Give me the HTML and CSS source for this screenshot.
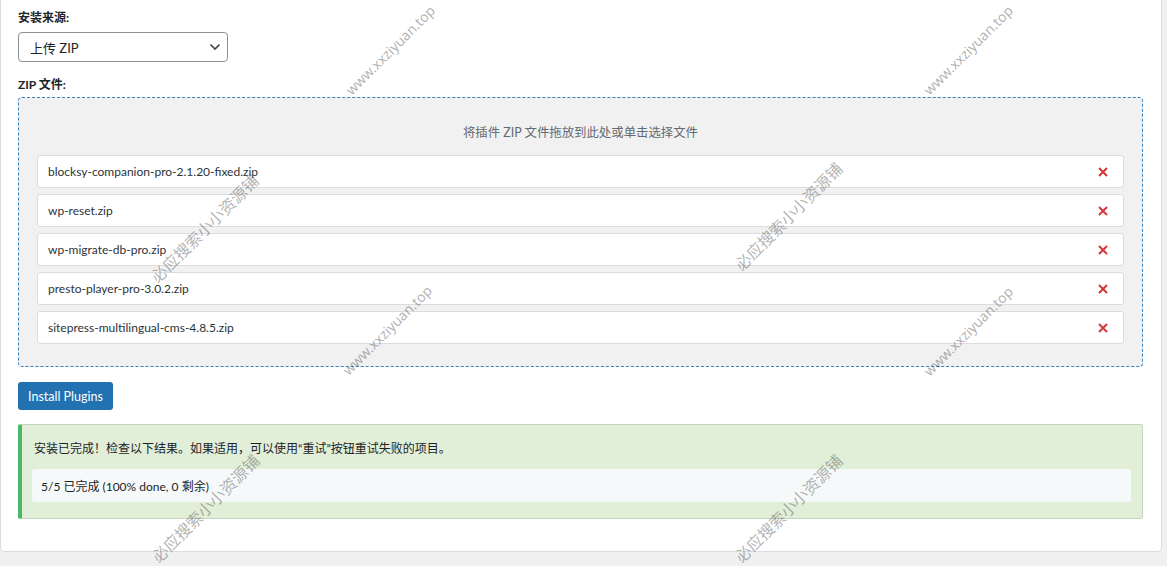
FILE: index.html
```html
<!DOCTYPE html>
<html lang="zh-CN">
<head>
  <meta charset="UTF-8" />
  <title>安装插件</title>
  <link rel="stylesheet" href="styles.css">
</head>
<body>
  <div class="card">
    <label class="field-label">安装来源:</label>
    <div class="select">
      <span>上传 ZIP</span>
      <svg class="chevron" width="12" height="8" viewBox="0 0 12 8"><path d="M1.5 1.5 L6 6 L10.5 1.5" fill="none" stroke="#3c434a" stroke-width="1.6"/></svg>
    </div>

    <label class="field-label zip-label">ZIP 文件:</label>
    <div class="dropzone">
      <p class="drop-hint">将插件 ZIP 文件拖放到此处或单击选择文件</p>
      <ul class="files">
        <li class="file"><span>blocksy-companion-pro-2.1.20-fixed.zip</span><svg class="remove" width="10" height="10" viewBox="0 0 10 10"><path d="M1 1 L9 9 M9 1 L1 9" stroke="#d63638" stroke-width="2"/></svg></li>
        <li class="file"><span>wp-reset.zip</span><svg class="remove" width="10" height="10" viewBox="0 0 10 10"><path d="M1 1 L9 9 M9 1 L1 9" stroke="#d63638" stroke-width="2"/></svg></li>
        <li class="file"><span>wp-migrate-db-pro.zip</span><svg class="remove" width="10" height="10" viewBox="0 0 10 10"><path d="M1 1 L9 9 M9 1 L1 9" stroke="#d63638" stroke-width="2"/></svg></li>
        <li class="file"><span>presto-player-pro-3.0.2.zip</span><svg class="remove" width="10" height="10" viewBox="0 0 10 10"><path d="M1 1 L9 9 M9 1 L1 9" stroke="#d63638" stroke-width="2"/></svg></li>
        <li class="file"><span>sitepress-multilingual-cms-4.8.5.zip</span><svg class="remove" width="10" height="10" viewBox="0 0 10 10"><path d="M1 1 L9 9 M9 1 L1 9" stroke="#d63638" stroke-width="2"/></svg></li>
      </ul>
    </div>

    <button class="btn">Install Plugins</button>

    <div class="notice">
      <p>安装已完成！检查以下结果。如果适用，可以使用“重试”按钮重试失败的项目。</p>
      <div class="progress">5/5 已完成 (100% done, 0 剩余)</div>
    </div>
  </div>

  <!-- 水印 -->
  <span class="wm wm-url" style="left:390px;top:50px">www.xxziyuan.top</span>
  <span class="wm wm-url" style="left:968px;top:50px">www.xxziyuan.top</span>
  <span class="wm wm-url" style="left:387px;top:330px">www.xxziyuan.top</span>
  <span class="wm wm-url" style="left:968px;top:331px">www.xxziyuan.top</span>
  <span class="wm wm-cn" style="left:204px;top:228px">必应搜索小小资源铺</span>
  <span class="wm wm-cn" style="left:788px;top:216px">必应搜索小小资源铺</span>
  <span class="wm wm-cn" style="left:205px;top:508px">必应搜索小小资源铺</span>
  <span class="wm wm-cn" style="left:788px;top:508px">必应搜索小小资源铺</span>
</body>
</html>
```

FILE: styles.css
```css
* {
  margin: 0;
  padding: 0;
  box-sizing: border-box;
}
html, body {
  width: 100%;
  height: 100%;
  overflow: hidden;
}
body {
  background: #f0f0f1;
  font-family: Lato, "Noto Sans CJK SC", sans-serif;
  font-size: 12px;
  color: #1d2327;
  position: relative;
}
.card {
  width: 1162px;
  background: #fff;
  border: 1px solid #dcdcde;
  border-top: none;
  border-radius: 0 0 5px 5px;
  padding: 8px 18px 32px 17px;
}
.field-label {
  display: block;
  font-weight: 700;
  line-height: 20px;
}
.select {
  margin-top: 4px;
  width: 210px;
  height: 30px;
  border: 1px solid #8c8f94;
  border-radius: 4px;
  display: flex;
  align-items: center;
  justify-content: space-between;
  padding: 0 6px 0 11px;
  font-size: 13px;
}
.zip-label {
  margin-top: 13px;
  margin-bottom: 2px;
}
.dropzone {
  border: 1px dashed #3582c4;
  border-radius: 4px;
  background: #f1f1f1;
  padding: 25px 18px 22px;
}
.drop-hint {
  text-align: center;
  color: #646970;
  font-size: 12.4px;
  line-height: 20px;
  margin-bottom: 12px;
}
.files {
  list-style: none;
  display: flex;
  flex-direction: column;
  gap: 6px;
}
.file {
  height: 33px;
  background: #fff;
  border: 1px solid #dcdcde;
  border-radius: 3px;
  display: flex;
  align-items: center;
  justify-content: space-between;
  padding: 0 15px 0 10px;
  color: #2c3338;
}
.btn {
  margin-top: 15px;
  height: 28px;
  padding: 0 10px;
  background: #2271b1;
  color: #fff;
  border: none;
  border-radius: 3px;
  font-family: inherit;
  font-size: 12.5px;
}
.notice {
  margin-top: 14px;
  background: #e1efd9;
  border: 1px solid #c5d6bf;
  border-left: 4px solid #4ab866;
  border-radius: 2px;
  padding: 14px 11px 16px 10px;
}
.notice p {
  line-height: 20px;
  margin-bottom: 10px;
  padding-left: 2px;
}
.progress {
  height: 33px;
  background: #f6f9fa;
  border-radius: 3px;
  padding: 0 9px;
  display: flex;
  align-items: center;
}
.wm {
  position: absolute;
  white-space: nowrap;
  color: rgba(70, 70, 70, 0.42);
  transform: translate(-50%, -50%) rotate(-45deg);
  pointer-events: none;
}
.wm-url {
  font-family: "Noto Sans", sans-serif;
  font-size: 14px;
}
.wm-cn {
  font-size: 16px;
}
```
